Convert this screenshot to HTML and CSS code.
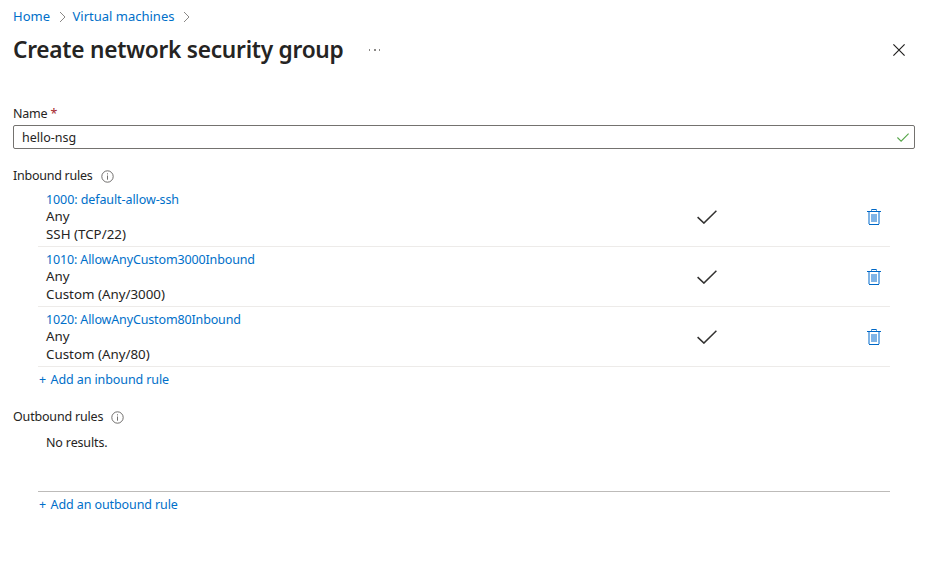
FILE: index.html
```html
<!DOCTYPE html>
<html lang="en">
<head>
<meta charset="utf-8">
<title>Create network security group</title>
<link rel="stylesheet" href="styles.css">
</head>
<body>
<svg class="defs" aria-hidden="true">
  <symbol id="chevron" viewBox="0 0 7 12"><path d="M1 1l5 5-5 5" fill="none" stroke="#8a8886"/></symbol>
  <symbol id="info" viewBox="0 0 13 13"><circle cx="6.5" cy="6.5" r="5.7" fill="none" stroke="#605e5c" stroke-width=".9"/><path d="M6.5 5.5v4.2M6.5 3.3v1.1" stroke="#605e5c" stroke-width=".9"/></symbol>
  <symbol id="check" viewBox="0 0 20 14"><path d="M.6 7.1l6.3 6L19.4.7" fill="none" stroke="#323130" stroke-width="1.5"/></symbol>
  <symbol id="trash" viewBox="0 0 14 16"><path d="M1 3h2v12H1zM11 3h2v12h-2zM4 5h6v8H4z" fill="#7fb4e6"/><path d="M0 2h14v1H0zM2 15h10v1H2zM5 0h4v1H5z" fill="#0067c5"/><path d="M4 0h1v2H4zM9 0h1v2H9z" fill="#5a9fdc"/></symbol>
</svg>
<header>
  <nav class="breadcrumb">
    <a>Home</a><svg class="chevron"><use href="#chevron"/></svg>
    <a>Virtual machines</a><svg class="chevron"><use href="#chevron"/></svg>
  </nav>
  <div class="heading">
    <h1>Create network security group</h1>
    <svg class="more" viewBox="0 0 12 2"><path d="M0 0h1v2H0zM5 0h2v2H5zM10 0h1v2h-1z" fill="#8a8886"/></svg>
    <svg class="close" viewBox="0 0 12 12"><path d="M.4.4l11.2 11.2M11.6.4L.4 11.6" stroke="#201f1e" stroke-width="1.15"/></svg>
  </div>
</header>
<main>
  <div class="label name"><span>Name</span> <span class="required">*</span></div>
  <div class="field"><span class="value">hello-nsg</span><svg class="valid" viewBox="0 0 12 9"><path d="M.4 4.5l3.7 3.7L11.6.6" fill="none" stroke="#57a64a" stroke-width="1.1"/></svg></div>
  <div class="label inbound"><span>Inbound rules</span><svg class="info"><use href="#info"/></svg></div>
  <section class="rules">
    <div class="rule">
      <div class="details"><a>1000: default-allow-ssh</a><span>Any</span><span>SSH (TCP/22)</span></div>
      <svg class="check"><use href="#check"/></svg><svg class="trash"><use href="#trash"/></svg>
    </div>
    <div class="rule">
      <div class="details"><a>1010: AllowAnyCustom3000Inbound</a><span>Any</span><span>Custom (Any/3000)</span></div>
      <svg class="check"><use href="#check"/></svg><svg class="trash"><use href="#trash"/></svg>
    </div>
    <div class="rule">
      <div class="details"><a>1020: AllowAnyCustom80Inbound</a><span>Any</span><span>Custom (Any/80)</span></div>
      <svg class="check"><use href="#check"/></svg><svg class="trash"><use href="#trash"/></svg>
    </div>
    <a class="add"><span>+</span><span>Add an inbound rule</span></a>
  </section>
  <div class="label outbound"><span>Outbound rules</span><svg class="info"><use href="#info"/></svg></div>
  <section class="rules">
    <div class="empty">No results.</div>
    <a class="add"><span>+</span><span>Add an outbound rule</span></a>
  </section>
</main>
</body>
</html>
```
FILE: styles.css
```css
* { box-sizing: border-box; }
body {
  margin: 0;
  padding: 6px 12px 0 13px;
  background: #fff;
  color: #252423;
  font: 12.5px/20px "Noto Sans", sans-serif;
}
svg { display: block; flex: none; }
.defs { position: absolute; width: 0; height: 0; }
a { color: #006fc9; }
.breadcrumb { display: flex; align-items: center; height: 20px; font-size: 13px; }
.chevron { width: 7px; height: 12px; margin: 1px 7px 0 8.5px; }
.heading { display: flex; align-items: center; height: 48px; }
h1 { margin: 0; width: 356px; font-size: 22.7px; font-weight: 600; line-height: 32px; letter-spacing: -.26px; white-space: nowrap; }
.more { width: 12px; height: 2px; }
.close { width: 12px; height: 12px; margin: 0 10px 0 auto; }
.label { display: flex; align-items: center; height: 20px; }
.name { margin-top: 30px; gap: 3px; letter-spacing: -.2px; }
.required { color: #a4262c; }
.field { display: flex; align-items: center; justify-content: space-between; height: 24px; margin-top: 1px; padding: 0 5px 0 8px; border: 1px solid #74726f; border-radius: 2px; }
.value { padding-top: 2px; }
.valid { width: 12px; height: 9px; }
.inbound { margin-top: 17px; letter-spacing: -.25px; }
.info { width: 13px; height: 13px; margin: 1px 0 0 8px; }
.rules { margin: 0 25px; }
.inbound + .rules { margin-top: 1px; }
.rule { display: flex; align-items: center; height: 60px; padding: 0 9px 0 8px; border-bottom: 1px solid #edebe9; }
.details { display: flex; flex-direction: column; width: 651px; line-height: 18px; font-size: 13.35px; }
.details a { padding-top: 3px; line-height: 14px; font-size: 12.5px; letter-spacing: -.14px; }
.rule:first-child a { letter-spacing: -.09px; }
.check { width: 20px; height: 14px; }
.trash { width: 14px; height: 16px; margin-left: auto; }
.add { display: flex; gap: 4.5px; height: 20px; margin: 3px 0 0 1px; letter-spacing: -.1px; }
.outbound { margin-top: 17px; letter-spacing: -.18px; }
.empty { height: 65px; padding: 6px 8px 0; border-bottom: 1px solid #bdbbb9; letter-spacing: -.15px; }
```
